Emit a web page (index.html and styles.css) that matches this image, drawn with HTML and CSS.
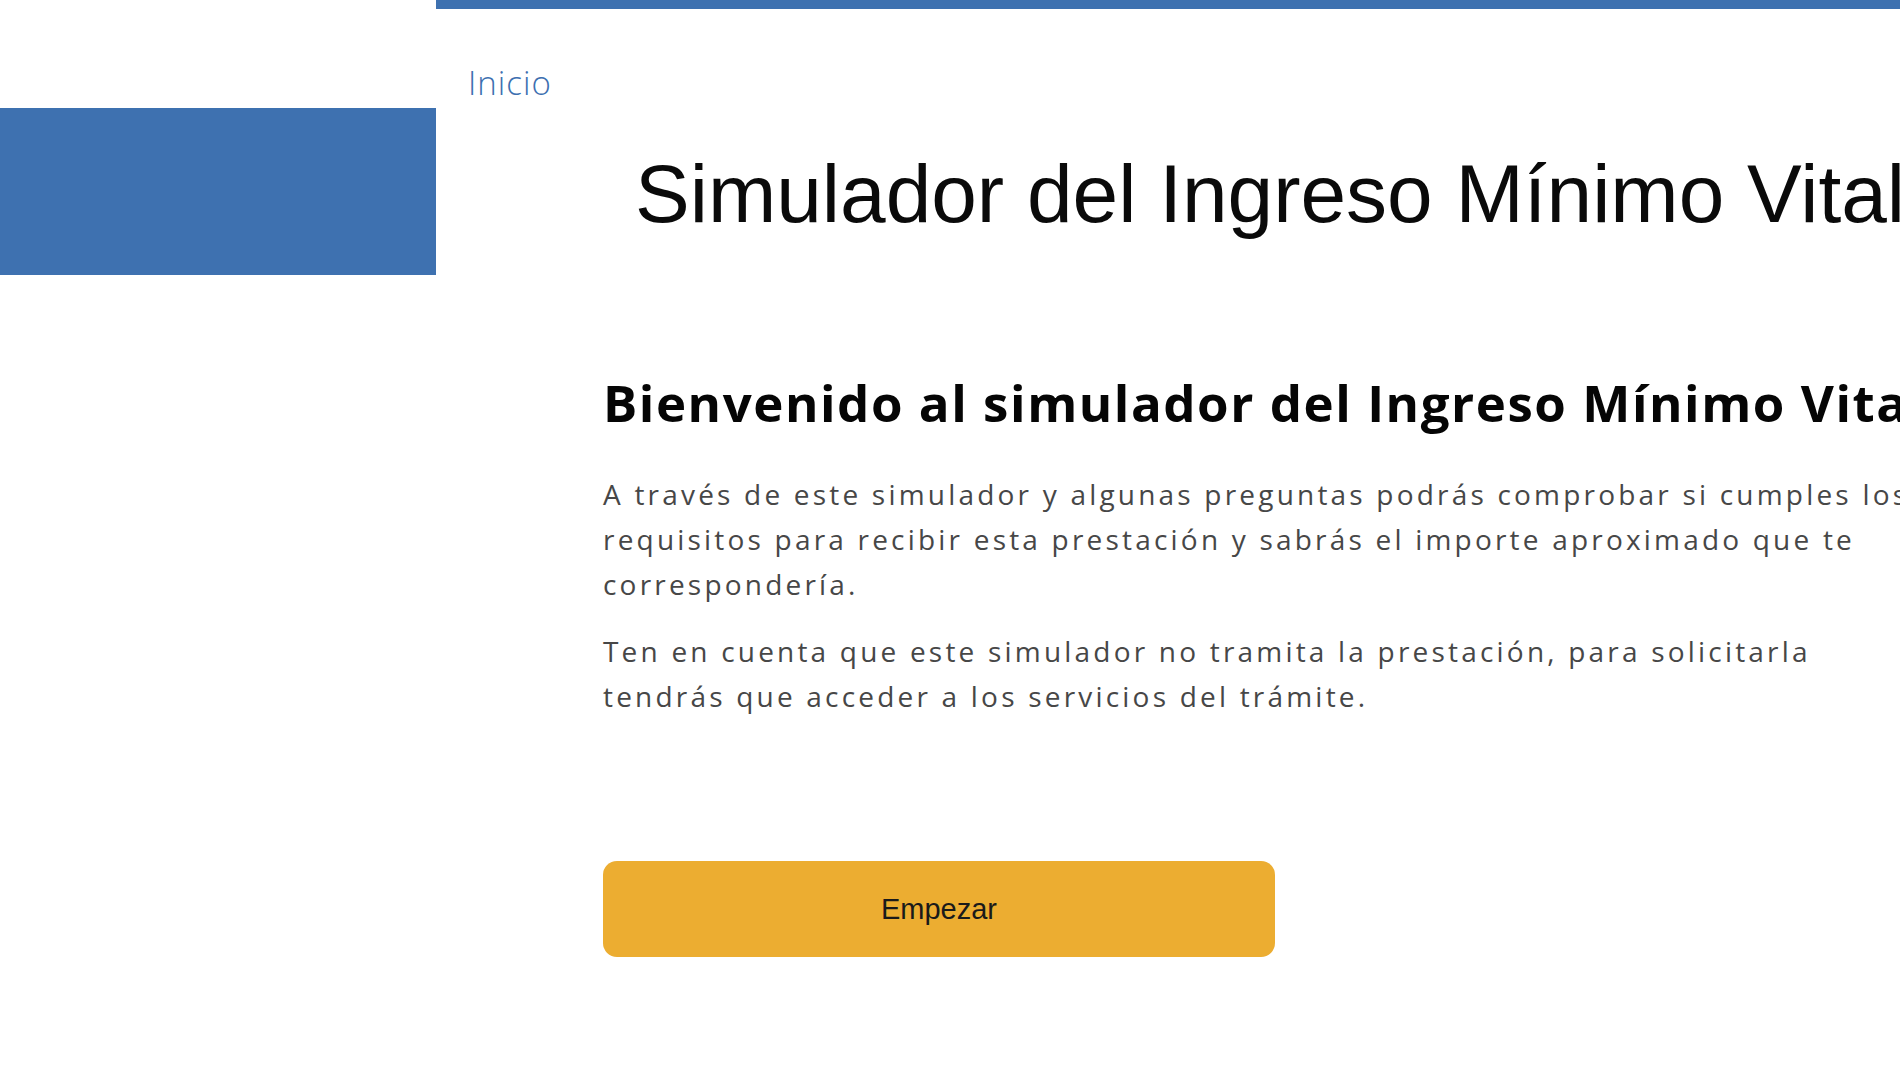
FILE: index.html
```html
<!DOCTYPE html>
<html lang="es">
<head>
<meta charset="utf-8">
<title>Simulador del Ingreso Mínimo Vital</title>
<link rel="stylesheet" href="styles.css">
</head>
<body>
<div class="page">
  <aside class="side">
    <div class="side-block"></div>
  </aside>
  <main class="main">
    <div class="topbar"></div>
    <nav class="crumbs"><a class="crumb" href="#">Inicio</a></nav>
    <h1 class="title">Simulador del Ingreso Mínimo Vital</h1>
    <section class="intro">
      <h2 class="intro-heading">Bienvenido al simulador del Ingreso Mínimo Vital</h2>
      <p class="intro-text">A través de este simulador y algunas preguntas podrás comprobar si cumples los requisitos para recibir esta prestación y sabrás el importe aproximado que te correspondería.</p>
      <p class="intro-text">Ten en cuenta que este simulador no tramita la prestación, para solicitarla tendrás que acceder a los servicios del trámite.</p>
      <button class="start-btn" type="button">Empezar</button>
    </section>
  </main>
</div>
</body>
</html>
```
FILE: styles.css
```css
html, body {
  margin: 0;
  padding: 0;
  background: #ffffff;
  overflow: hidden;
  width: 1900px;
  height: 1069px;
}

.page {
  display: flex;
  width: 1900px;
  height: 1069px;
}

.side {
  flex: 0 0 436px;
  padding-top: 108px;
}

.side-block {
  height: 167px;
  background: #3e71b0;
}

.main {
  flex: 1 1 auto;
  min-width: 0;
  display: flex;
  flex-direction: column;
}

.topbar {
  height: 9px;
  background: #3e71b0;
}

.crumbs {
  margin-top: 52px;
  padding-left: 32px;
  height: 44px;
}

.crumb {
  font-family: "Open Sans", "Liberation Sans", sans-serif;
  font-weight: 300;
  font-size: 33px;
  line-height: 44px;
  letter-spacing: 1px;
  color: #3d6fb0;
  text-decoration: none;
}

.title {
  margin: 43px 0 0 199px;
  font-family: "Liberation Sans", Arial, sans-serif;
  font-weight: 400;
  font-size: 82px;
  line-height: 92px;
  color: #0a0a0a;
  white-space: nowrap;
}

.intro {
  margin: 130px 0 0 167px;
  width: 1325px;
  display: flex;
  flex-direction: column;
  align-items: flex-start;
}

.intro-heading {
  margin: 0;
  font-family: "Open Sans", "Liberation Sans", sans-serif;
  font-weight: 700;
  font-size: 51px;
  line-height: 64px;
  letter-spacing: 1.55px;
  color: #050505;
  white-space: nowrap;
}

.intro-text {
  margin: 38px 0 0;
  font-family: "Open Sans", "Liberation Sans", sans-serif;
  font-size: 28px;
  line-height: 45px;
  letter-spacing: 3.2px;
  color: #474747;
}

.intro-text + .intro-text {
  margin-top: 22px;
}

.start-btn {
  margin-top: 142px;
  width: 672px;
  height: 96px;
  border: none;
  border-radius: 14px;
  background: #ecad31;
  font-family: "Liberation Sans", Arial, sans-serif;
  font-size: 29px;
  color: #1a1a1a;
  cursor: pointer;
}
```
